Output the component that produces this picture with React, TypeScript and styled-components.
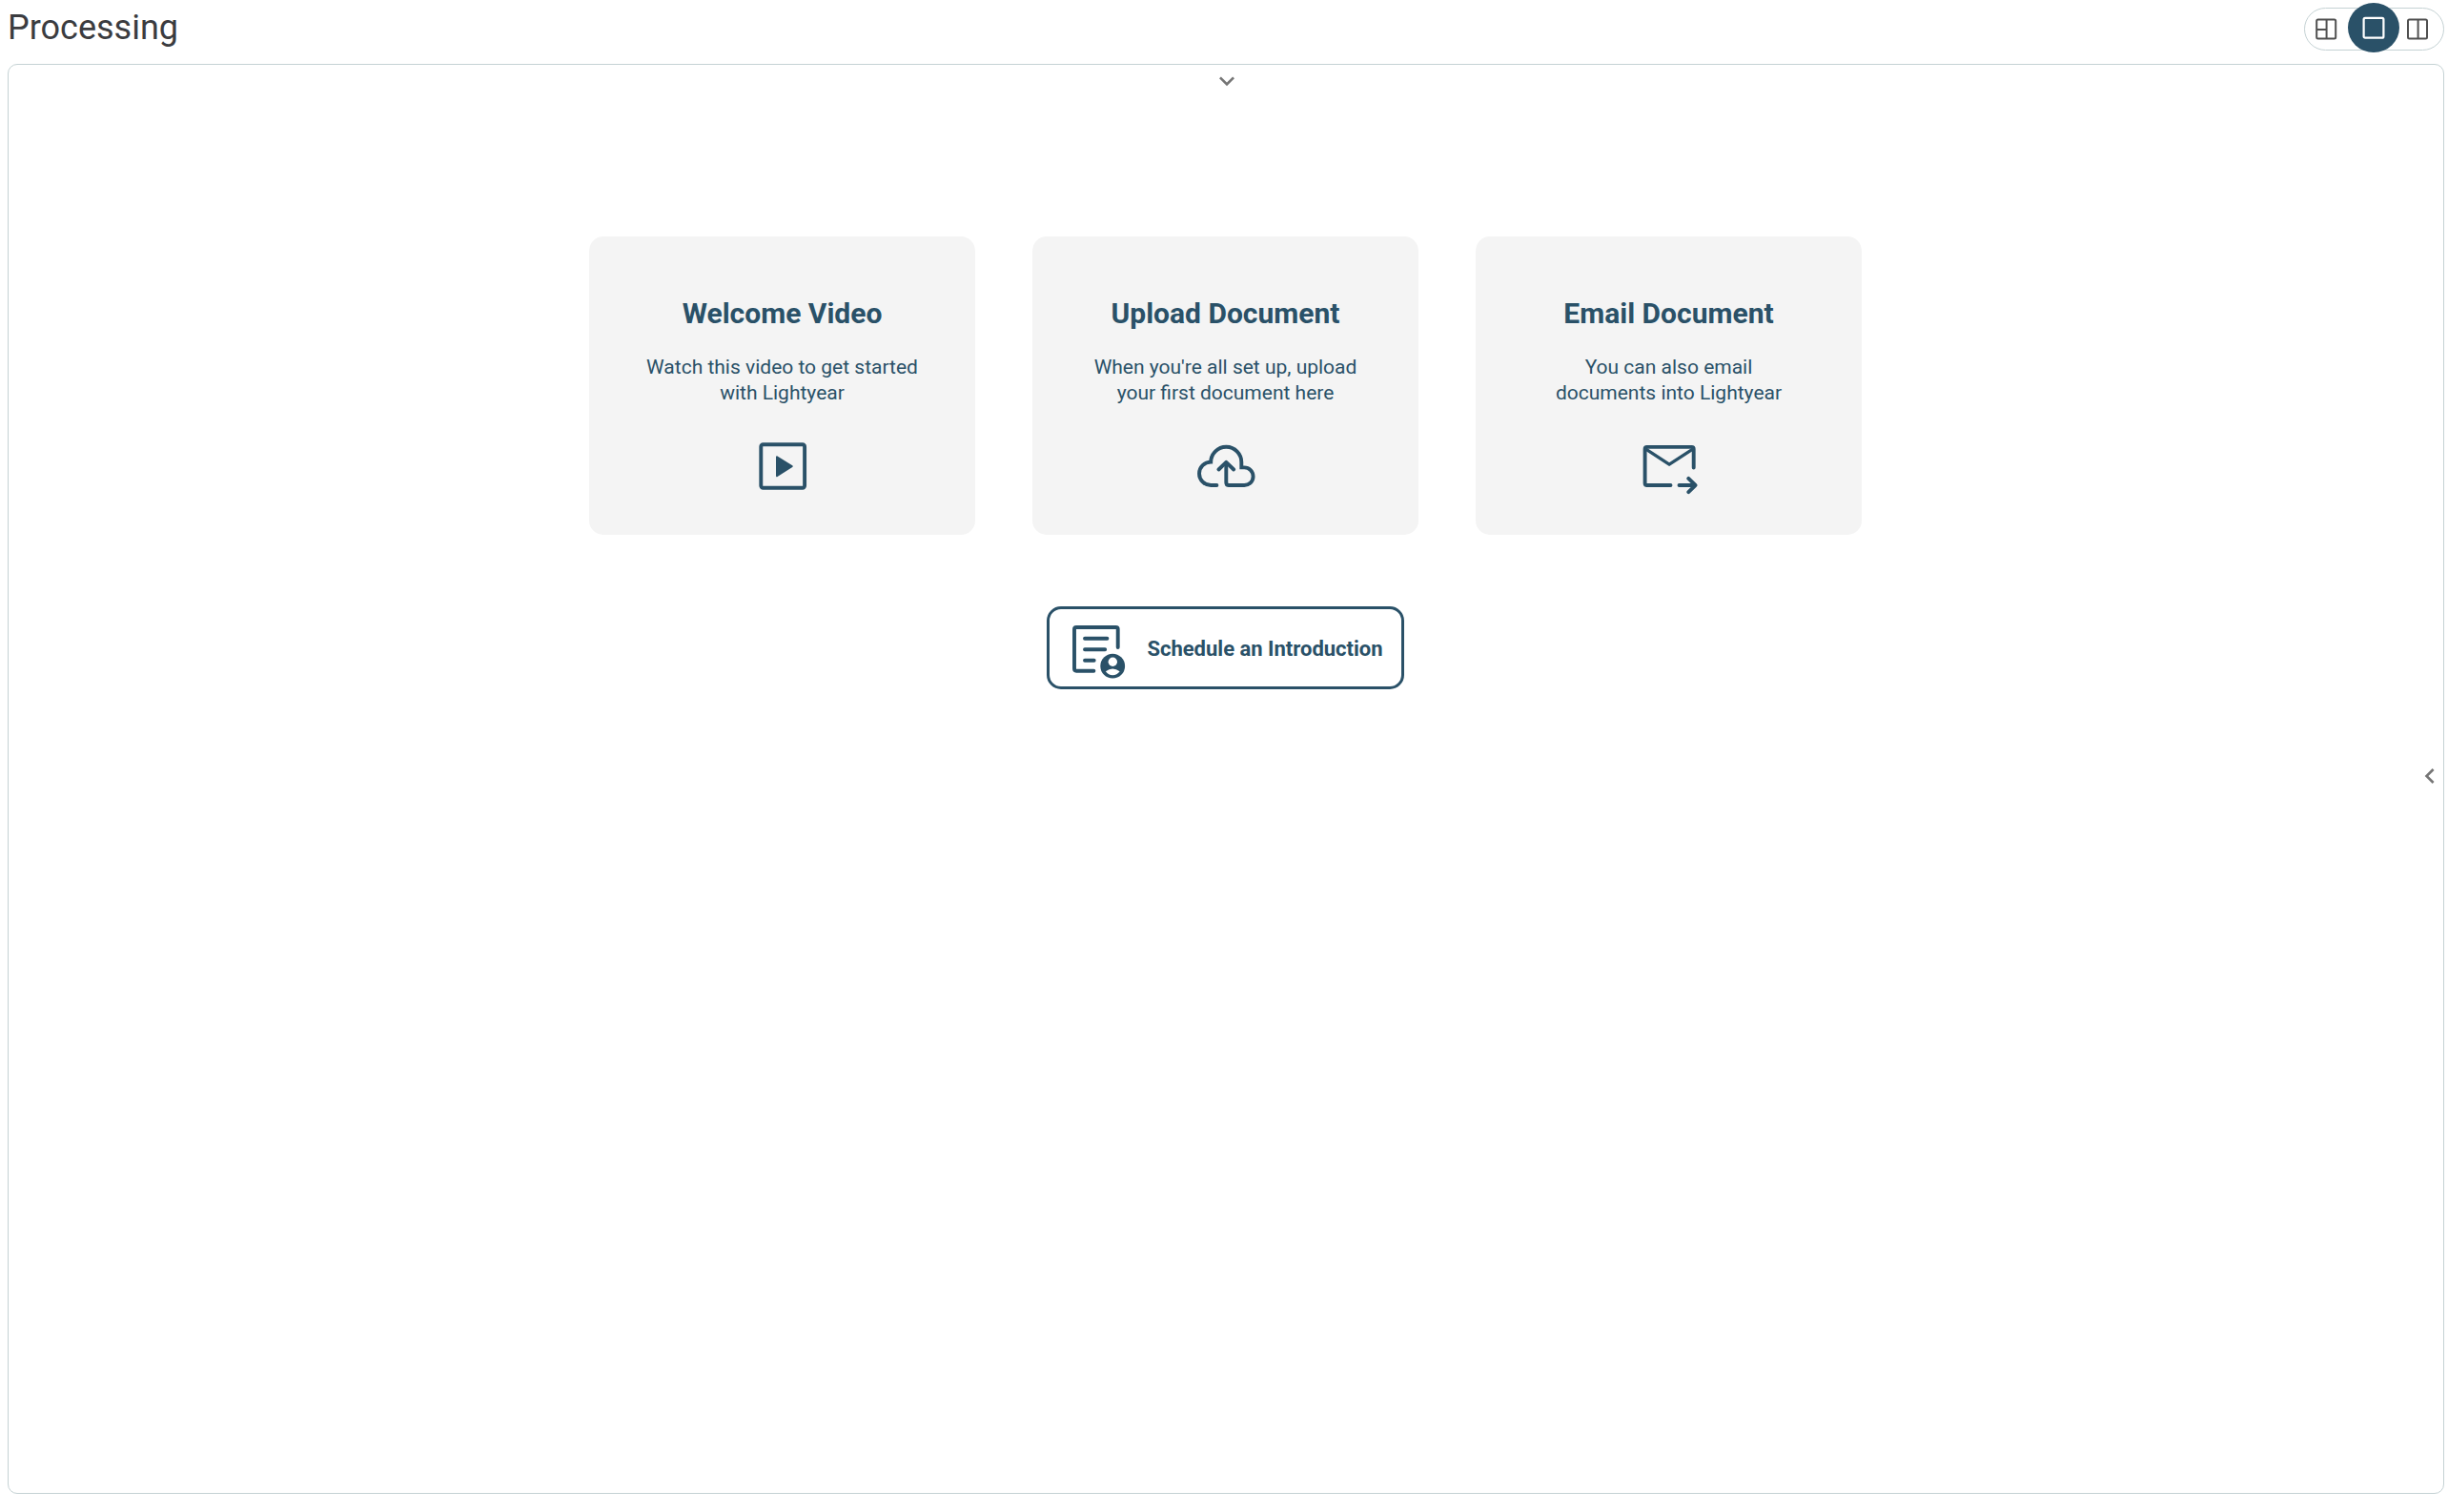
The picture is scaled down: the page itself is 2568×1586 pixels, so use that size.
import React, { useState } from "react";
import styled, { createGlobalStyle } from "styled-components";

const navy = "#2a5168";
const line = "#c5d2d4";

const GlobalStyle = createGlobalStyle`
  *, *::before, *::after { box-sizing: border-box; }
  body {
    margin: 0;
    background: #fff;
    font-family: Roboto, "Liberation Sans", sans-serif;
  }
  button {
    margin: 0;
    padding: 0;
    border: 0;
    background: none;
    color: inherit;
    font: inherit;
    cursor: pointer;
  }
`;

const Page = styled.div`
  display: flex;
  flex-direction: column;
  min-height: 100vh;
  padding: 8px 4px 19px 8px;
`;

const Header = styled.header`
  display: flex;
  align-items: flex-start;
  justify-content: space-between;
  margin-bottom: 14px;
`;

const Title = styled.h1`
  margin: 0;
  color: #3b3c40;
  font-size: 36px;
  font-weight: 400;
  line-height: 42px;
`;

const Switcher = styled.div`
  display: flex;
  height: 45px;
  padding-right: 8px;
  border: 1px solid ${line};
  border-radius: 23px;
`;

const SwitchButton = styled.button<{ $active: boolean; $width: number }>`
  display: flex;
  align-items: center;
  justify-content: center;
  width: ${(p) => (p.$active ? 54 : p.$width)}px;
  margin: ${(p) => (p.$active ? "-6px 0 -3px" : "0")};
  border-radius: 50%;
  background: ${(p) => (p.$active ? navy : "transparent")};
  color: ${(p) => (p.$active ? "#fff" : "#505050")};
`;

const Panel = styled.main`
  flex: 1;
  display: grid;
  grid-template-columns: 30px 1fr 31px;
  border: 1px solid ${line};
  border-radius: 10px;
`;

const Content = styled.div`
  grid-column: 2;
  display: flex;
  flex-direction: column;
  align-items: center;
`;

const PanelToggle = styled.button`
  display: flex;
  align-items: center;
  justify-content: center;
  height: 34px;
  padding-left: 2px;
  color: #757575;
`;

const TopToggle = styled(PanelToggle)`
  margin-bottom: 146px;
`;

const SideToggle = styled(PanelToggle)`
  align-self: center;
  margin-bottom: 6px;
`;

const Cards = styled.div`
  display: flex;
  flex-wrap: wrap;
  justify-content: center;
  gap: 60px;
  margin-bottom: 75px;
`;

const Card = styled.button`
  display: flex;
  flex-direction: column;
  align-items: center;
  width: 405px;
  padding: 63px 40px 39px;
  border-radius: 15px;
  background: #f4f4f4;
  color: ${navy};
`;

const CardTitle = styled.span`
  margin-bottom: 26px;
  font-size: 30px;
  font-weight: 700;
  line-height: 35px;
`;

const CardText = styled.span`
  margin-bottom: 29px;
  font-size: 21px;
  line-height: 27px;
  text-align: center;
  white-space: pre-line;
`;

const ScheduleButton = styled.button`
  display: flex;
  align-items: center;
  gap: 17px;
  height: 87px;
  padding: 2px 19px 0 18px;
  border: 3px solid ${navy};
  border-radius: 15px;
  color: ${navy};
  font-size: 22px;
  font-weight: 700;
  line-height: 27px;
`;

const LargeIcon = styled.svg.attrs({
  viewBox: "0 0 67 67",
  width: 67,
  height: 67,
  "aria-hidden": true,
})`
  display: block;
  flex: none;
  fill: none;
  stroke: currentColor;
  stroke-width: 3.9;
  stroke-linecap: round;
  stroke-linejoin: round;
`;

const SmallIcon = styled.svg.attrs({
  viewBox: "0 0 24 24",
  width: 24,
  height: 24,
  "aria-hidden": true,
})`
  display: block;
  flex: none;
  fill: none;
  stroke: currentColor;
`;

const Chevron = styled.svg.attrs({
  viewBox: "0 0 24 24",
  width: 32,
  height: 32,
  "aria-hidden": true,
})`
  display: block;
  flex: none;
  fill: currentColor;
`;

const PlayIcon = () => (
  <LargeIcon>
    <rect x="11.3" y="11.3" width="45.8" height="45.5" rx="2.2" />
    <path d="M28 24.3 43.7 34.2 28 44.1z" fill="currentColor" strokeWidth="2" />
  </LargeIcon>
);

const CloudIcon = () => (
  <LargeIcon>
    <path
      strokeLinejoin="miter"
      d="M24.4 54H18.2A12.2 12.2 0 0 1 18.2 29.6A16 16 0 0 1 50.3 30V35.4H53.3A9.3 9.3 0 0 1 53.3 54H37Q34.3 54 34.3 51.3V31"
    />
    <path d="M26.4 37.5 34.3 29.8 42.2 37.5" />
  </LargeIcon>
);

const MailIcon = () => (
  <LargeIcon>
    <path d="M59.7 35.5V16Q59.7 13.9 57.6 13.9H10.7Q8.6 13.9 8.6 16V51.9Q8.6 54 10.7 54H35.5" />
    <path d="M9.6 16.2 34.1 32.2 58.7 16.2" strokeWidth="3.3" />
    <path d="M44.5 54H60.5M54.3 46.9 61.5 54 54.3 61.1" />
  </LargeIcon>
);

const ScheduleIcon = () => (
  <LargeIcon>
    <path d="M53.7 32V13.1Q53.7 11 51.6 11H10.1Q8 11 8 13.1V54.6Q8 56.7 10.1 56.7H28.4" />
    <path d="M19 22.7H42.4M19 34.3H40.2M19 45.7H28.7" />
    <circle cx="48.2" cy="51.7" r="12.9" fill="currentColor" stroke="none" />
    <circle cx="48.3" cy="47.2" r="4.7" fill="#fff" stroke="none" />
    <path
      d="M40.9 57.3Q44.4 54.4 48.2 54.4T55.6 57.3Q52.6 61.3 48.2 61.3T40.9 57.3z"
      fill="#fff"
      stroke="none"
    />
  </LargeIcon>
);

const GridIcon = () => (
  <SmallIcon strokeWidth="2">
    <rect x="1.2" y="1.5" width="20" height="20" rx="1.5" />
    <path d="M11.6 1.5V21.5M1.2 12H11.6" />
  </SmallIcon>
);

const SquareIcon = () => (
  <SmallIcon strokeWidth="2.2">
    <rect x="1.6" y="1.9" width="20.8" height="20.8" rx="1.5" />
  </SmallIcon>
);

const ColumnsIcon = () => (
  <SmallIcon strokeWidth="2">
    <rect x="2" y="1.5" width="20" height="20" rx="1.5" />
    <path d="M12.6 1.5V21.5" />
  </SmallIcon>
);

const layouts = [
  { id: "grid", label: "Grid layout", width: 45, Icon: GridIcon },
  { id: "single", label: "Single layout", width: 54, Icon: SquareIcon },
  { id: "columns", label: "Column layout", width: 38, Icon: ColumnsIcon },
];

const cards = [
  {
    title: "Welcome Video",
    text: "Watch this video to get started\nwith Lightyear",
    Icon: PlayIcon,
  },
  {
    title: "Upload Document",
    text: "When you're all set up, upload\nyour first document here",
    Icon: CloudIcon,
  },
  {
    title: "Email Document",
    text: "You can also email\ndocuments into Lightyear",
    Icon: MailIcon,
  },
];

export default function App() {
  const [layout, setLayout] = useState("single");

  return (
    <>
      <GlobalStyle />
      <Page>
        <Header>
          <Title>Processing</Title>
          <Switcher role="group" aria-label="Layout">
            {layouts.map(({ id, label, width, Icon }) => (
              <SwitchButton
                key={id}
                type="button"
                aria-label={label}
                aria-pressed={layout === id}
                $active={layout === id}
                $width={width}
                onClick={() => setLayout(id)}
              >
                <Icon />
              </SwitchButton>
            ))}
          </Switcher>
        </Header>
        <Panel>
          <Content>
            <TopToggle type="button" aria-label="Expand top panel">
              <Chevron>
                <path d="M7.41 8.59 12 13.17l4.59-4.58L18 10l-6 6-6-6z" />
              </Chevron>
            </TopToggle>
            <Cards>
              {cards.map(({ title, text, Icon }) => (
                <Card key={title} type="button">
                  <CardTitle>{title}</CardTitle>
                  <CardText>{text}</CardText>
                  <Icon />
                </Card>
              ))}
            </Cards>
            <ScheduleButton type="button">
              <ScheduleIcon />
              Schedule an Introduction
            </ScheduleButton>
          </Content>
          <SideToggle type="button" aria-label="Expand side panel">
            <Chevron>
              <path d="M15.41 7.41 14 6l-6 6 6 6 1.41-1.41L10.83 12z" />
            </Chevron>
          </SideToggle>
        </Panel>
      </Page>
    </>
  );
}
